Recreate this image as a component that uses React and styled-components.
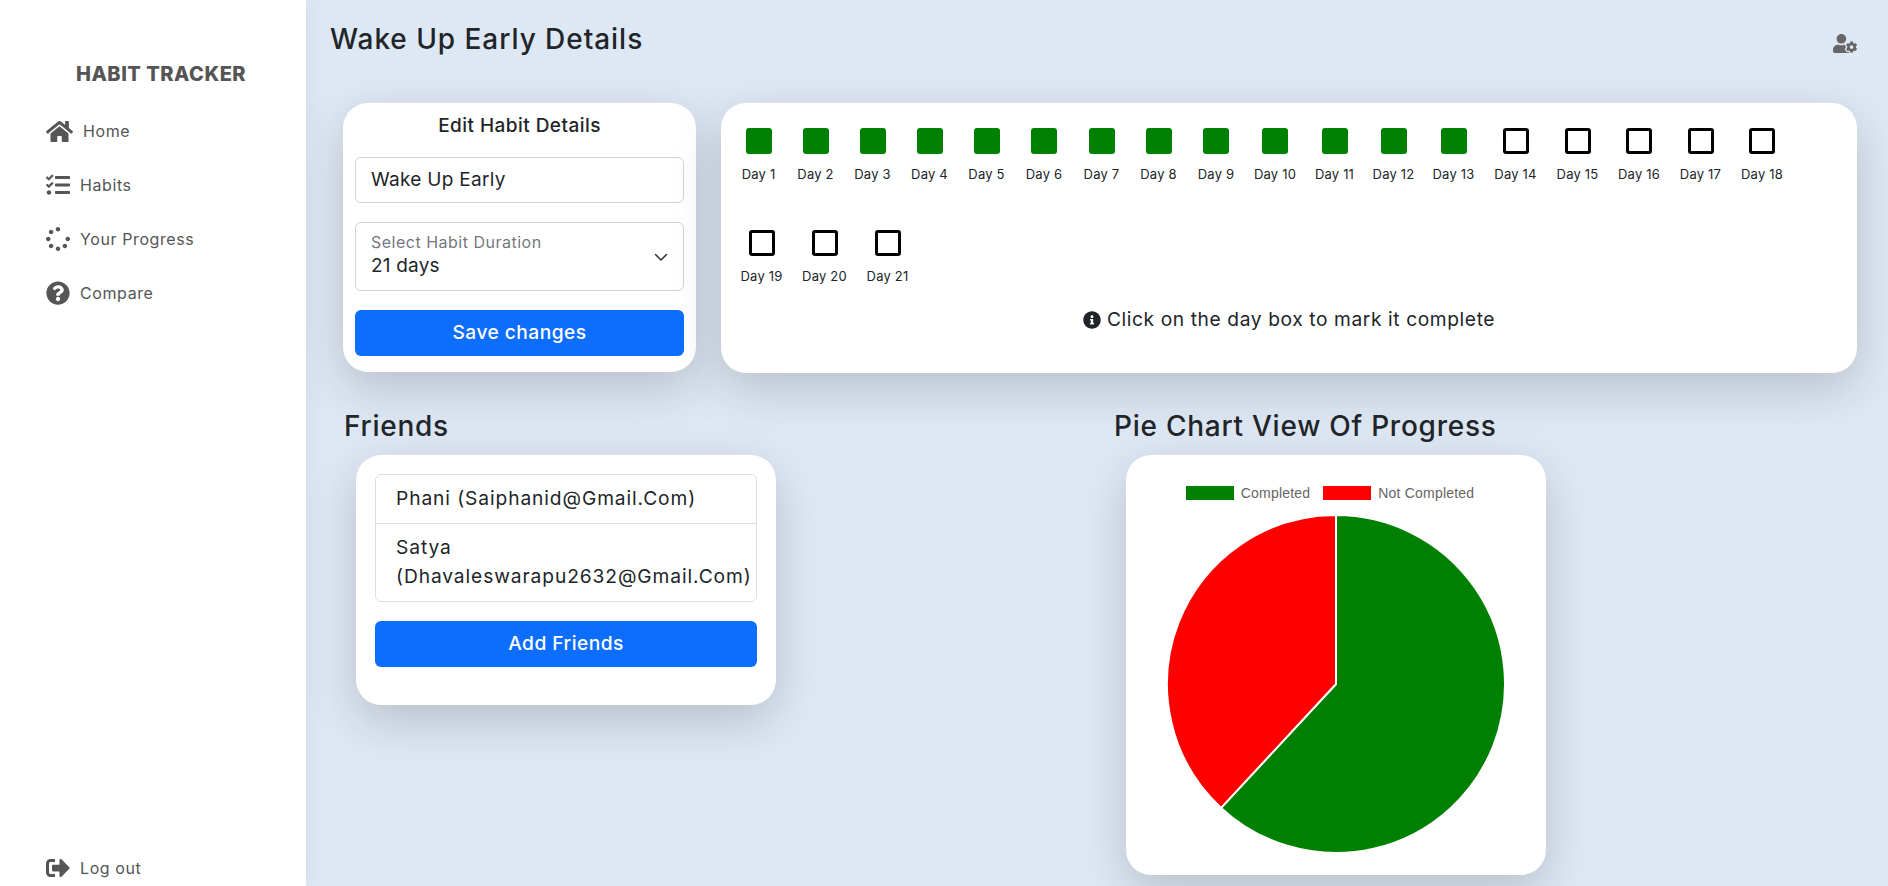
import React from "react";
import styled, { createGlobalStyle } from "styled-components";
import {
  FaHome,
  FaTasks,
  FaSpinner,
  FaQuestionCircle,
  FaSignOutAlt,
  FaUserCog,
  FaInfoCircle,
} from "react-icons/fa";

const GlobalStyle = createGlobalStyle`
  html, body {
    margin: 0;
    padding: 0;
    height: 100%;
    overflow: hidden;
    background: #dee8f4;
    color: #212529;
    font-family: "Inter", "Noto Sans", sans-serif;
  }
  * { box-sizing: border-box; }
`;

const Page = styled.div`
  display: flex;
  height: 886px;
  overflow: hidden;
`;

const Sidebar = styled.aside`
  flex: 0 0 306px;
  display: flex;
  flex-direction: column;
  background: #fff;
  color: #555;
  padding: 61px 0 0 46px;
  box-shadow: 0 0 24px rgba(0, 0, 0, 0.06);
  z-index: 1;
`;

const Brand = styled.div`
  font-size: 20px;
  line-height: 26px;
  font-weight: 800;
  letter-spacing: 0.5px;
  margin: 0 0 17px 30px;
  white-space: nowrap;
`;

const Nav = styled.nav`
  flex: 1;
  display: flex;
  flex-direction: column;
`;

const NavItem = styled.div`
  display: flex;
  align-items: center;
  gap: 10px;
  height: 54px;
  font-size: 16px;
  letter-spacing: 0.6px;
  svg {
    font-size: ${(props) => (props.$icon ? props.$icon : 24)}px;
    flex: none;
  }
`;

const LogoutItem = styled(NavItem)`
  height: 36px;
`;

const Main = styled.main`
  flex: 1;
  min-width: 0;
`;

const Header = styled.header`
  height: 103px;
  display: flex;
  align-items: flex-start;
  justify-content: space-between;
  padding: 20px 31px 0 24px;
`;

const PageTitle = styled.h1`
  margin: 0;
  font-size: 28px;
  line-height: 38px;
  font-weight: 500;
  letter-spacing: 0.95px;
`;

const UserButton = styled.div`
  color: #666;
  font-size: 21px;
  line-height: 1;
  padding-top: 13px;
  svg {
    display: block;
    width: 24px;
    height: 21px;
  }
`;

const TopRow = styled.section`
  display: grid;
  grid-template-columns: 353px 1136px;
  gap: 25px;
  padding-left: 37px;
`;

const Card = styled.div`
  background: #fff;
  border-radius: 25px;
  box-shadow: 0 1rem 3rem rgba(0, 0, 0, 0.175);
`;

const EditCard = styled(Card)`
  height: 269px;
  padding: 9px 12px 0;
`;

const CardTitle = styled.div`
  text-align: center;
  font-size: 19px;
  line-height: 27px;
  font-weight: 500;
  letter-spacing: 0.45px;
  margin-bottom: 18px;
`;

const TextInput = styled.div`
  height: 46px;
  border: 1px solid #ced4da;
  border-radius: 6px;
  padding: 0 15px 2px;
  display: flex;
  align-items: center;
  font-size: 19px;
  letter-spacing: 0.3px;
  margin-bottom: 19px;
`;

const SelectBox = styled.div`
  height: 69px;
  border: 1px solid #ced4da;
  border-radius: 6px;
  padding: 10px 14px 0 15px;
  display: flex;
  align-items: center;
  justify-content: space-between;
  margin-bottom: 19px;
`;

const SelectText = styled.div`
  display: flex;
  flex-direction: column;
  margin-top: -14px;
`;

const SelectLabel = styled.span`
  font-size: 16px;
  line-height: 21px;
  letter-spacing: 0.5px;
  color: rgba(33, 37, 41, 0.65);
`;

const SelectValue = styled.span`
  font-size: 19px;
  line-height: 25px;
  letter-spacing: 0.2px;
`;

const Chevron = styled.svg`
  width: 16px;
  height: 16px;
  margin-top: -10px;
`;

const PrimaryButton = styled.button`
  display: block;
  width: 100%;
  height: 46px;
  border: 0;
  border-radius: 6px;
  background: #0d6efd;
  color: #fff;
  font-family: inherit;
  font-size: 19.2px;
  font-weight: 500;
  letter-spacing: 0.45px;
  padding: 0 0 2px;
`;

const DaysCard = styled(Card)`
  height: 270px;
  padding: 25px 9px 0;
  display: flex;
  flex-direction: column;
`;

const DayGrid = styled.div`
  display: flex;
  flex-wrap: wrap;
  width: 1080px;
`;

const DayItem = styled.div`
  height: 102px;
  display: flex;
  flex-direction: column;
  align-items: center;
  font-size: 13px;
  line-height: 20px;
  letter-spacing: 0.2px;
  white-space: nowrap;
`;

const DayBox = styled.div`
  width: 26px;
  height: 26px;
  border-radius: 3px;
  margin-bottom: 10px;
  background: ${(props) => (props.$done ? "#008000" : "#fff")};
  border: ${(props) => (props.$done ? "0" : "3px solid #000")};
`;

const Hint = styled.div`
  margin-top: -26px;
  display: flex;
  align-items: center;
  justify-content: center;
  gap: 6px;
  font-size: 19.2px;
  line-height: 27px;
  letter-spacing: 0.6px;
  svg {
    font-size: 18px;
  }
`;

const BottomRow = styled.section`
  display: grid;
  grid-template-columns: 770px 1fr;
  padding: 34px 0 0 38px;
`;

const SectionTitle = styled.h2`
  margin: 0 0 10px;
  font-size: 28px;
  line-height: 38px;
  font-weight: 500;
  letter-spacing: 0.75px;
`;

const FriendsCard = styled(Card)`
  width: 420px;
  height: 250px;
  margin-left: 12px;
  padding: 19px 19px 0;
`;

const FriendList = styled.ul`
  list-style: none;
  margin: 0 0 19px;
  padding: 0;
  border: 1px solid rgba(0, 0, 0, 0.125);
  border-radius: 6px;
`;

const FriendItem = styled.li`
  padding: 9px 2px 10.4px 20px;
  font-size: 19.2px;
  line-height: 28.8px;
  letter-spacing: 0.9px;
  & + & {
    border-top: 1px solid rgba(0, 0, 0, 0.125);
  }
`;

const ChartCard = styled(Card)`
  width: 420px;
  height: 420px;
  margin-left: 12px;
  padding-top: 31px;
  display: flex;
  flex-direction: column;
  align-items: center;
`;

const Legend = styled.div`
  display: flex;
  gap: 13px;
  height: 14px;
  margin: 0 12px 14px 0;
  font-family: "Liberation Sans", Arial, sans-serif;
  font-size: 14px;
  line-height: 14px;
  letter-spacing: 0.2px;
  color: #666;
`;

const LegendEntry = styled.div`
  display: flex;
  gap: 7px;
`;

const Swatch = styled.span`
  width: 48px;
  height: 14px;
  background: ${(props) => props.$color};
`;

const PieSvg = styled.svg`
  display: block;
  width: 340px;
  height: 340px;
`;

// item widths follow the label widths of the original row
const dayWidths = [
  57, 57, 57, 57, 57, 58, 57, 57, 58, 60, 59, 59, 61, 63, 61, 62, 61, 62, 63,
  63, 63,
];

const days = dayWidths.map((width, i) => ({
  label: `Day ${i + 1}`,
  width,
  done: i < 13,
}));

function Pie({ done, total }) {
  const r = 169;
  const c = 170;
  const angle = (done / total) * 2 * Math.PI;
  const x = c + r * Math.sin(angle);
  const y = c - r * Math.cos(angle);
  const large = done / total > 0.5 ? 1 : 0;
  return (
    <PieSvg viewBox="0 0 340 340">
      <path
        d={`M${c} ${c} L${c} ${c - r} A${r} ${r} 0 ${large} 1 ${x} ${y} Z`}
        fill="#008000"
        stroke="#fff"
        strokeWidth="2"
      />
      <path
        d={`M${c} ${c} L${x} ${y} A${r} ${r} 0 ${1 - large} 1 ${c} ${c - r} Z`}
        fill="#ff0000"
        stroke="#fff"
        strokeWidth="2"
      />
    </PieSvg>
  );
}

export default function App() {
  return (
    <>
      <GlobalStyle />
      <Page>
        <Sidebar>
          <Brand>HABIT TRACKER</Brand>
          <Nav>
            <NavItem $icon={27}>
              <FaHome />
              Home
            </NavItem>
            <NavItem>
              <FaTasks />
              Habits
            </NavItem>
            <NavItem>
              <FaSpinner />
              Your Progress
            </NavItem>
            <NavItem>
              <FaQuestionCircle />
              Compare
            </NavItem>
          </Nav>
          <LogoutItem>
            <FaSignOutAlt />
            Log out
          </LogoutItem>
        </Sidebar>
        <Main>
          <Header>
            <PageTitle>Wake Up Early Details</PageTitle>
            <UserButton>
              <FaUserCog />
            </UserButton>
          </Header>
          <TopRow>
            <EditCard>
              <CardTitle>Edit Habit Details</CardTitle>
              <TextInput>Wake Up Early</TextInput>
              <SelectBox>
                <SelectText>
                  <SelectLabel>Select Habit Duration</SelectLabel>
                  <SelectValue>21 days</SelectValue>
                </SelectText>
                <Chevron viewBox="0 0 16 16">
                  <path
                    d="m2.5 5.5 5.5 5.5 5.5-5.5"
                    fill="none"
                    stroke="#343a40"
                    strokeWidth="1.6"
                    strokeLinecap="round"
                    strokeLinejoin="round"
                  />
                </Chevron>
              </SelectBox>
              <PrimaryButton>Save changes</PrimaryButton>
            </EditCard>
            <DaysCard>
              <DayGrid>
                {days.map((day) => (
                  <DayItem key={day.label} style={{ width: day.width }}>
                    <DayBox $done={day.done} />
                    {day.label}
                  </DayItem>
                ))}
              </DayGrid>
              <Hint>
                <FaInfoCircle />
                Click on the day box to mark it complete
              </Hint>
            </DaysCard>
          </TopRow>
          <BottomRow>
            <div>
              <SectionTitle>Friends</SectionTitle>
              <FriendsCard>
                <FriendList>
                  <FriendItem>Phani (Saiphanid@Gmail.Com)</FriendItem>
                  <FriendItem>
                    Satya (Dhavaleswarapu2632@Gmail.Com)
                  </FriendItem>
                </FriendList>
                <PrimaryButton>Add Friends</PrimaryButton>
              </FriendsCard>
            </div>
            <div>
              <SectionTitle>Pie Chart View Of Progress</SectionTitle>
              <ChartCard>
                <Legend>
                  <LegendEntry>
                    <Swatch $color="#008000" />
                    Completed
                  </LegendEntry>
                  <LegendEntry>
                    <Swatch $color="#ff0000" />
                    Not Completed
                  </LegendEntry>
                </Legend>
                <Pie done={13} total={21} />
              </ChartCard>
            </div>
          </BottomRow>
        </Main>
      </Page>
    </>
  );
}
